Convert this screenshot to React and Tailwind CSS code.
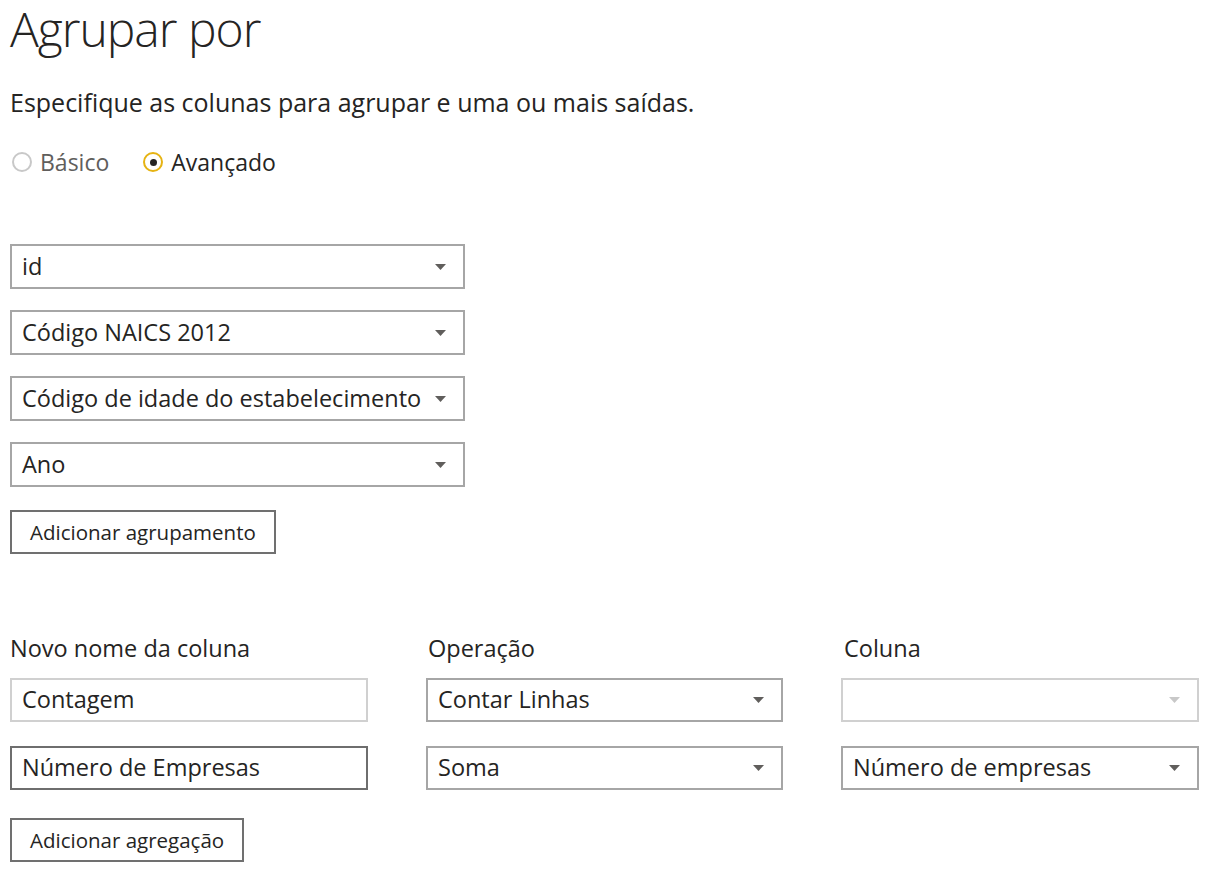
import React from 'react'

const font = { fontFamily: '"Open Sans", "Noto Sans", sans-serif' }

const Caret = ({ disabled }) => (
  <svg width="11" height="6" viewBox="0 0 11 6" className="shrink-0">
    <path d="M0 0 L11 0 L5.5 6 Z" fill={disabled ? '#c8c8c8' : '#605e5c'} />
  </svg>
)

const Dropdown = ({ value, disabled, className = '' }) => (
  <div
    className={`flex items-center justify-between h-[44px] pl-[10px] pr-[17px] border-2 bg-white ${
      disabled ? 'border-[#d0d0d0]' : 'border-[#a6a6a6]'
    } ${className}`}
  >
    <span className="text-[23.5px] text-[#252423] whitespace-nowrap">{value}</span>
    <Caret disabled={disabled} />
  </div>
)

const TextInput = ({ value, focused }) => (
  <div
    className={`flex items-center h-[44px] px-[10px] border-2 bg-white ${
      focused ? 'border-[#6e6e6e]' : 'border-[#d0d0d0]'
    }`}
  >
    <span className="text-[23.5px] text-[#252423] whitespace-nowrap">{value}</span>
  </div>
)

const Button = ({ children }) => (
  <button className="h-[44px] px-[18px] border-2 border-[#707070] bg-white text-[20.5px] text-[#252423] whitespace-nowrap">
    {children}
  </button>
)

export default function App() {
  const groups = ['id', 'Código NAICS 2012', 'Código de idade do estabelecimento', 'Ano']

  return (
    <div className="w-[1216px] h-[876px] bg-white overflow-hidden pl-[10px] pt-[2px]" style={font}>
      <h1 className="h-[54px] leading-[54px] text-[48px] font-light text-[#252423] tracking-[-1px]">
        Agrupar por
      </h1>

      <p className="mt-[30px] h-[32px] leading-[32px] text-[25px] text-[#252423]">
        Especifique as colunas para agrupar e uma ou mais saídas.
      </p>

      <div className="mt-[28px] h-[32px] flex items-center gap-[34px] pl-[2px]">
        <label className="flex items-center gap-[8px]">
          <span className="w-[20px] h-[20px] rounded-full border-2 border-[#c8c8c8] bg-white" />
          <span className="text-[23px] text-[#605e5c]">Básico</span>
        </label>
        <label className="flex items-center gap-[8px]">
          <span className="w-[20px] h-[20px] rounded-full border-2 border-[#e6b312] bg-white flex items-center justify-center">
            <span className="w-[7px] h-[7px] rounded-full bg-[#252423]" />
          </span>
          <span className="text-[23px] text-[#252423]">Avançado</span>
        </label>
      </div>

      {/* Group-by columns */}
      <div className="mt-[66px] w-[455px] flex flex-col gap-[21px]">
        {groups.map((g) => (
          <Dropdown key={g} value={g} className="h-[45px]" />
        ))}
      </div>

      <div className="mt-[23px]">
        <Button>Adicionar agrupamento</Button>
      </div>

      {/* Aggregations */}
      <div className="mt-[79px] grid grid-cols-[358px_357px_358px] gap-x-[58px]">
        <div className="h-[30px] leading-[30px] text-[23.5px] text-[#252423]">Novo nome da coluna</div>
        <div className="h-[30px] leading-[30px] text-[23.5px] text-[#252423] pl-[2px]">Operação</div>
        <div className="h-[30px] leading-[30px] text-[23.5px] text-[#252423] pl-[3px]">Coluna</div>

        <div className="mt-[15px]"><TextInput value="Contagem" /></div>
        <div className="mt-[15px]"><Dropdown value="Contar Linhas" /></div>
        <div className="mt-[15px]"><Dropdown value="" disabled /></div>

        <div className="mt-[24px]"><TextInput value="Número de Empresas" focused /></div>
        <div className="mt-[24px]"><Dropdown value="Soma" /></div>
        <div className="mt-[24px]"><Dropdown value="Número de empresas" /></div>
      </div>

      <div className="mt-[28px]">
        <Button>Adicionar agregação</Button>
      </div>
    </div>
  )
}
